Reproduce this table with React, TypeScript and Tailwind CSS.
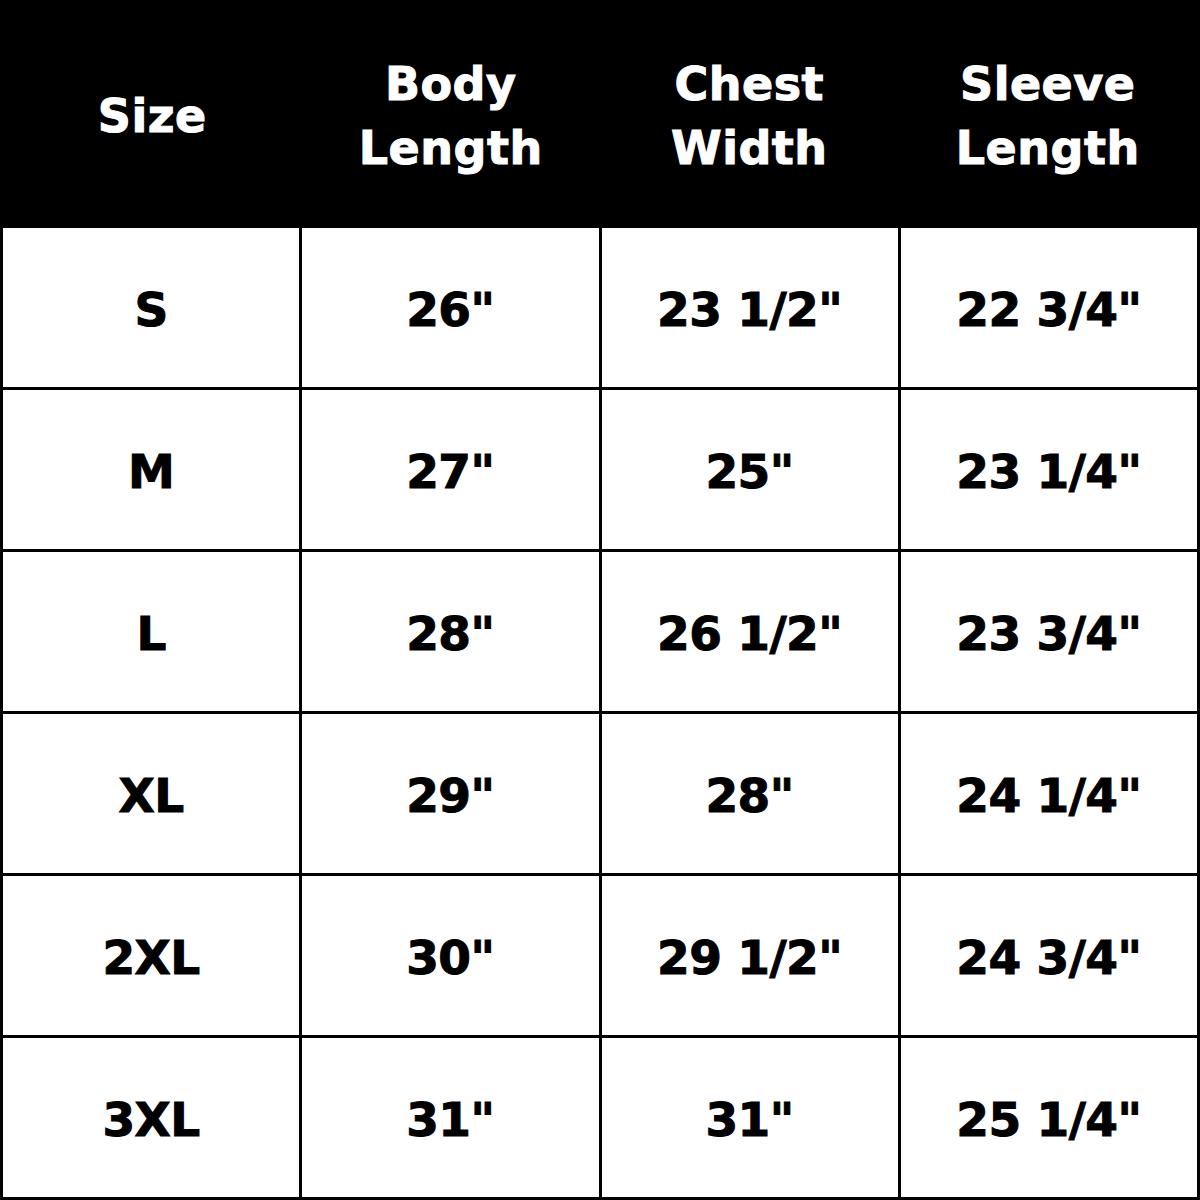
import React from 'react';

const headers = [['Size'], ['Body', 'Length'], ['Chest', 'Width'], ['Sleeve', 'Length']];

const rows = [
  ['S', '26"', '23 1/2"', '22 3/4"'],
  ['M', '27"', '25"', '23 1/4"'],
  ['L', '28"', '26 1/2"', '23 3/4"'],
  ['XL', '29"', '28"', '24 1/4"'],
  ['2XL', '30"', '29 1/2"', '24 3/4"'],
  ['3XL', '31"', '31"', '25 1/4"'],
];

export default function App() {
  return (
    <div
      className="w-[1200px] h-[1200px] bg-white text-black flex flex-col"
      style={{ fontFamily: '"DejaVu Sans", "Liberation Sans", sans-serif' }}
    >
      {/* header */}
      <div className="h-[228px] bg-black grid grid-cols-4 pl-[3px] pr-[3px]">
        {headers.map((h, i) => (
          <div key={i} className="flex flex-col items-center justify-center pt-[4px] text-white font-bold text-[46px] leading-[64px] tracking-[0.5px] [-webkit-text-stroke:1px_white]">
            {h.map((line) => (
              <span key={line}>{line}</span>
            ))}
          </div>
        ))}
      </div>

      {/* body */}
      <div className="flex-1 grid grid-cols-4 grid-rows-6 border-l-[3px] border-black">
        {rows.map((r, ri) =>
          r.map((cell, ci) => (
            <div
              key={ri + '-' + ci}
              className="flex items-center justify-center border-r-[3px] border-b-[3px] border-black pt-[6px] font-bold text-[47px] tracking-[-0.5px] [-webkit-text-stroke:1px_black]"
            >
              {cell}
            </div>
          ))
        )}
      </div>
    </div>
  );
}
